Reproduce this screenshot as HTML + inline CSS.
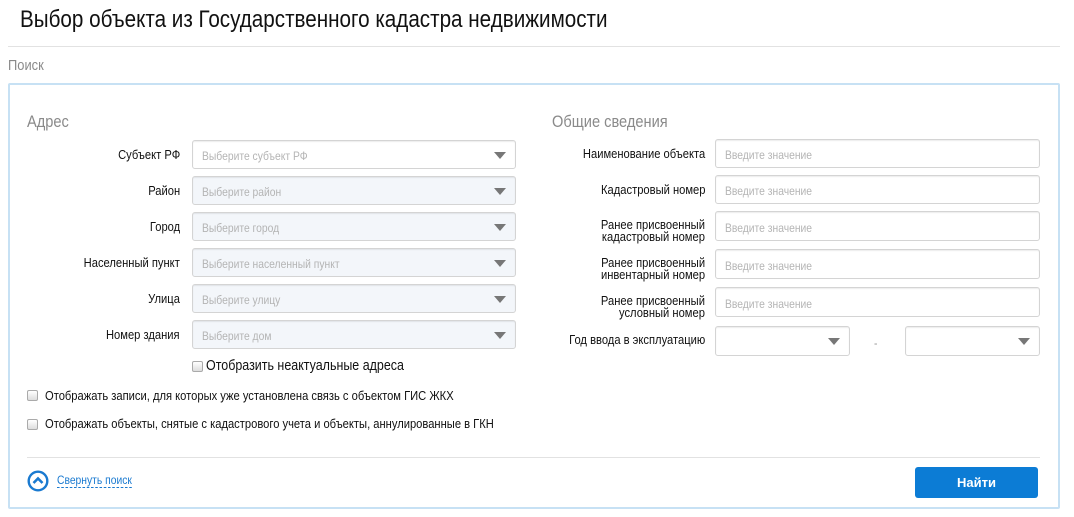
<!DOCTYPE html>
<html><head><meta charset="utf-8"><style>
*{box-sizing:border-box;margin:0;padding:0}
body{width:1074px;height:517px;background:#fff;font-family:"Liberation Sans",sans-serif;color:#111;position:relative;overflow:hidden}
.a{position:absolute;white-space:nowrap;transform:scaleX(.86);transform-origin:0 0}
.r{transform-origin:100% 0}
.n{display:inline-block;transform:scaleX(.86);transform-origin:0 0;white-space:nowrap}
.title{left:20px;top:6px;font-size:24px;color:#111}
.hr{position:absolute;height:1px;background:#e2e2e2}
.box{position:absolute;left:8px;top:83px;width:1052px;height:426px;border:2px solid #c7e1f4;border-radius:2px}
.sec{font-size:17px;color:#8a8a8a}
.lbl{font-size:13px;text-align:right;line-height:12px}
.sel{position:absolute;height:29px;border:1px solid #d4d4d4;border-radius:3px;background:#f3f6fa;box-shadow:inset 0 1px 1px rgba(0,0,0,.08);font-size:12px;color:#b4b4b4;padding:8px 0 0 9px}
.sel.w{background:#fff}
.sel .ar{position:absolute;right:9px;top:11px;width:0;height:0;border-left:6px solid transparent;border-right:6px solid transparent;border-top:7px solid #777}
.cb{position:absolute;width:11px;height:11px;border:1px solid #aaa;border-radius:2px;background:linear-gradient(#fff,#ddd)}
.t13{font-size:13px}
</style></head><body>
<div class="a title">Выбор объекта из Государственного кадастра недвижимости</div>
<div class="hr" style="left:8px;top:46px;width:1052px"></div>
<div class="a sec" style="left:8px;top:57px;font-size:15px">Поиск</div>
<div class="box"></div>

<div class="a sec" style="left:27px;top:112px">Адрес</div>
<div class="a sec" style="left:552px;top:112px">Общие сведения</div>

<div class="a lbl r" style="right:894px;top:149px">Субъект РФ</div>
<div class="sel w" style="left:192px;top:140px;width:324px"><span class="n">Выберите субъект РФ</span><span class="ar"></span></div>
<div class="a lbl r" style="right:894px;top:185px">Район</div>
<div class="sel" style="left:192px;top:176px;width:324px"><span class="n">Выберите район</span><span class="ar"></span></div>
<div class="a lbl r" style="right:894px;top:221px">Город</div>
<div class="sel" style="left:192px;top:212px;width:324px"><span class="n">Выберите город</span><span class="ar"></span></div>
<div class="a lbl r" style="right:894px;top:257px">Населенный пункт</div>
<div class="sel" style="left:192px;top:248px;width:324px"><span class="n">Выберите населенный пункт</span><span class="ar"></span></div>
<div class="a lbl r" style="right:894px;top:293px">Улица</div>
<div class="sel" style="left:192px;top:284px;width:324px"><span class="n">Выберите улицу</span><span class="ar"></span></div>
<div class="a lbl r" style="right:894px;top:329px">Номер здания</div>
<div class="sel" style="left:192px;top:320px;width:324px"><span class="n">Выберите дом</span><span class="ar"></span></div>

<div class="cb" style="left:192px;top:361px"></div>
<div class="a" style="left:206px;top:358px;font-size:14.5px">Отобразить неактуальные адреса</div>
<div class="cb" style="left:27px;top:390px"></div>
<div class="a t13" style="left:45px;top:388px">Отображать записи, для которых уже установлена связь с объектом ГИС ЖКХ</div>
<div class="cb" style="left:27px;top:419px"></div>
<div class="a t13" style="left:45px;top:416px">Отображать объекты, снятые с кадастрового учета и объекты, аннулированные в ГКН</div>

<div class="a lbl r" style="right:369px;top:148px">Наименование объекта</div>
<div class="sel w" style="left:715px;top:139px;width:325px"><span class="n">Введите значение</span></div>
<div class="a lbl r" style="right:369px;top:184px">Кадастровый номер</div>
<div class="sel w" style="left:715px;top:175px;width:325px"><span class="n">Введите значение</span></div>
<div class="a lbl r" style="right:369px;top:219px">Ранее присвоенный<br>кадастровый номер</div>
<div class="sel w" style="left:715px;top:211px;width:325px;height:30px;padding-top:9px"><span class="n">Введите значение</span></div>
<div class="a lbl r" style="right:369px;top:257px">Ранее присвоенный<br>инвентарный номер</div>
<div class="sel w" style="left:715px;top:249px;width:325px;height:30px;padding-top:9px"><span class="n">Введите значение</span></div>
<div class="a lbl r" style="right:369px;top:295px">Ранее присвоенный<br>условный номер</div>
<div class="sel w" style="left:715px;top:287px;width:325px;height:30px;padding-top:9px"><span class="n">Введите значение</span></div>
<div class="a lbl r" style="right:369px;top:334px">Год ввода в эксплуатацию</div>
<div class="sel w" style="left:715px;top:326px;width:135px;height:30px"><span class="ar"></span></div>
<div class="a" style="left:874px;top:336px;font-size:12px;color:#999">-</div>
<div class="sel w" style="left:905px;top:326px;width:135px;height:30px"><span class="ar"></span></div>

<div class="hr" style="left:27px;top:457px;width:1013px"></div>
<svg style="position:absolute;left:27px;top:470px" width="22" height="22" viewBox="0 0 22 22"><circle cx="11" cy="11" r="9.3" fill="none" stroke="#1a7ad0" stroke-width="2.4"/><path d="M6.5 13 L11 8.5 L15.5 13" fill="none" stroke="#1a7ad0" stroke-width="2.6"/></svg>
<div class="a" style="left:57px;top:473px;font-size:12px;color:#1a7ad0;border-bottom:1px dashed #1a7ad0;line-height:14px">Свернуть поиск</div>
<div style="position:absolute;left:915px;top:467px;width:123px;height:31px;background:#0c7cd5;border-radius:3px;color:#fff;font-size:13px;font-weight:bold;text-align:center;line-height:31px">Найти</div>
</body></html>
